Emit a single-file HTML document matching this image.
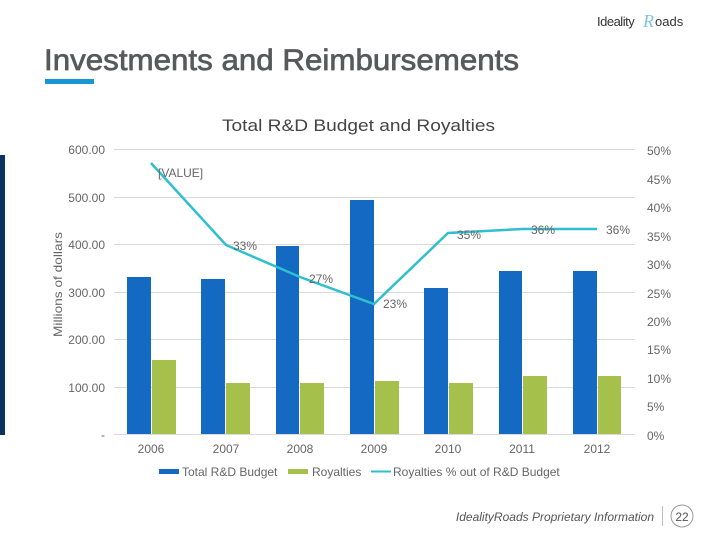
<!DOCTYPE html>
<html><head><meta charset="utf-8"><style>
html,body{margin:0;padding:0;background:#fff;}
svg{display:block;font-family:"Liberation Sans",sans-serif;}
</style></head><body>
<svg width="720" height="540" viewBox="0 0 720 540" xmlns="http://www.w3.org/2000/svg">
<rect width="720" height="540" fill="#fff"/>
<text x="597" y="26" font-size="13" fill="#333" letter-spacing="-0.5">Ideality</text>
<text x="643" y="27" font-size="18" fill="#7fc4e0" font-style="italic" font-family="Liberation Serif">R</text>
<text x="655" y="26" font-size="13" fill="#333">oads</text>
<text x="44" y="70" font-size="30" fill="#58595b" stroke="#58595b" stroke-width="0.7" textLength="475" lengthAdjust="spacingAndGlyphs">Investments and Reimbursements</text>
<rect x="45" y="79" width="49" height="5" fill="#1797d4"/>
<rect x="0" y="155" width="5" height="280" fill="#0b3560"/>
<text x="222" y="131" font-size="17" fill="#444" textLength="273" lengthAdjust="spacingAndGlyphs">Total R&amp;D Budget and Royalties</text>
<g stroke="#d9d9d9" stroke-width="1">
<line x1="114" y1="149.5" x2="635" y2="149.5"/><line x1="114" y1="197.5" x2="635" y2="197.5"/>
<line x1="114" y1="244.5" x2="635" y2="244.5"/><line x1="114" y1="292.5" x2="635" y2="292.5"/>
<line x1="114" y1="339.5" x2="635" y2="339.5"/><line x1="114" y1="387.5" x2="635" y2="387.5"/>
<line x1="114" y1="434.5" x2="635" y2="434.5"/>
</g>
<g font-size="12" fill="#666" text-anchor="end">
<text x="105" y="154">600.00</text><text x="105" y="202">500.00</text><text x="105" y="249">400.00</text>
<text x="105" y="297">300.00</text><text x="105" y="344">200.00</text><text x="105" y="392">100.00</text>
<text x="105" y="439">-</text>
</g>
<text transform="translate(62,337) rotate(-90)" font-size="12" fill="#666" textLength="105" lengthAdjust="spacingAndGlyphs">Millions of dollars</text>
<g font-size="12" fill="#666">
<text x="647" y="155">50%</text><text x="647" y="184">45%</text><text x="647" y="212">40%</text>
<text x="647" y="241">35%</text><text x="647" y="269">30%</text><text x="647" y="298">25%</text>
<text x="647" y="326">20%</text><text x="647" y="354">15%</text><text x="647" y="383">10%</text>
<text x="647" y="411">5%</text><text x="647" y="440">0%</text>
</g>
<g fill="#1469c2">
<rect x="127" y="277" width="24" height="157"/><rect x="201" y="279" width="24" height="155"/>
<rect x="276" y="246" width="23" height="188"/><rect x="350" y="200" width="24" height="234"/>
<rect x="424" y="288" width="24" height="146"/><rect x="499" y="271" width="23" height="163"/>
<rect x="573" y="271" width="24" height="163"/>
</g>
<g fill="#a5c14b">
<rect x="152" y="360" width="24" height="74"/><rect x="226" y="383" width="24" height="51"/>
<rect x="300" y="383" width="24" height="51"/><rect x="375" y="381" width="24" height="53"/>
<rect x="449" y="383" width="24" height="51"/><rect x="523" y="376" width="24" height="58"/>
<rect x="598" y="376" width="23" height="58"/>
</g>
<polyline points="151,163 226,245 300,277 374,304 448,233 522,229 597,229" fill="none" stroke="#2fbfd0" stroke-width="2.5"/>
<g font-size="12" fill="#666">
<text x="158" y="177">[VALUE]</text><text x="233" y="250">33%</text><text x="309" y="283">27%</text>
<text x="383" y="308">23%</text><text x="457" y="239">35%</text><text x="531" y="234">36%</text>
<text x="606" y="234">36%</text>
</g>
<g font-size="12" fill="#666" text-anchor="middle">
<text x="151" y="453">2006</text><text x="226" y="453">2007</text><text x="300" y="453">2008</text>
<text x="374" y="453">2009</text><text x="448" y="453">2010</text><text x="522" y="453">2011</text>
<text x="597" y="453">2012</text>
</g>
<rect x="159" y="469" width="20" height="5" fill="#1469c2"/>
<text x="182" y="476" font-size="12" fill="#666">Total R&amp;D Budget</text>
<rect x="288" y="469" width="20" height="5" fill="#a5c14b"/>
<text x="312" y="476" font-size="12" fill="#666">Royalties</text>
<line x1="371" y1="471.5" x2="391" y2="471.5" stroke="#2fbfd0" stroke-width="2"/>
<text x="393" y="476" font-size="12" fill="#666">Royalties % out of R&amp;D Budget</text>
<text x="654" y="521" font-size="12" fill="#555" font-style="italic" text-anchor="end">IdealityRoads Proprietary Information</text>
<line x1="662.5" y1="506" x2="662.5" y2="526" stroke="#bbb"/>
<circle cx="682" cy="516" r="11" fill="none" stroke="#999"/>
<text x="682" y="521" font-size="12" fill="#555" text-anchor="middle">22</text>
</svg>
</body></html>
